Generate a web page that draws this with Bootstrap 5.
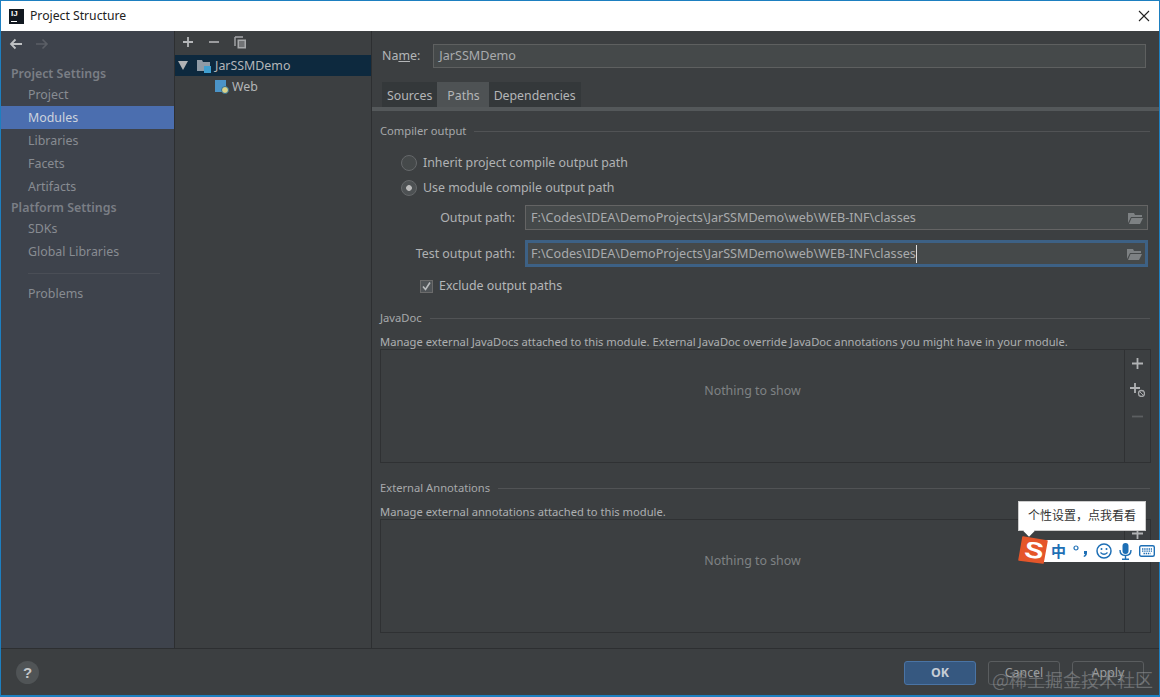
<!DOCTYPE html>
<html lang="en">

<head>
  <meta charset="UTF-8">
  <meta name="viewport" content="width=device-width, initial-scale=1.0">
  <title>Project Structure</title>
  <link href="https://cdn.jsdelivr.net/npm/bootstrap@5.3.3/dist/css/bootstrap.min.css" rel="stylesheet">
  <style>
    html, body { height: 100%; }
    body { background: #3c3f41; color: #b4b6b8; font-family: "Noto Sans", "Noto Sans CJK SC", sans-serif; font-size: 12.4px; line-height: 18px; overflow: hidden; }
    .ide-window { position: relative; width: 1160px; height: 697px; border: 1px solid #1d7fc0; border-bottom-width: 2px; background: #3c3f41; }
    .ide-title { height: 30px; background: #fff; color: #222; padding-left: 8px; gap: 6px; flex: none; font-size: 12.2px; }
    .ide-logo { width: 15px; height: 15px; background: #111820; color: #fff; font: bold 8px/10px "Liberation Sans", sans-serif; padding-left: 2px; position: relative; }
    .ide-logo::after { content: ""; position: absolute; left: 2px; bottom: 2px; width: 6px; height: 1px; background: #fff; }
    .ide-close { margin-left: auto; margin-right: 9px; }
    .ide-body { height: 618px; flex: none; border-bottom: 1px solid #2d2f31; }
    .side-pane { width: 174px; flex: none; background: #3e434c; border-right: 1px solid #2d2f31; }
    .side-nav { height: 25px; padding: 7px 0 0 8px; gap: 12px; margin-bottom: 8px; }
    .side-head { font-weight: 600; color: #7a7e85; height: 19px; line-height: 19px; padding-left: 10px; }
    .side-item { color: #888c92; height: 23px; line-height: 23px; padding-left: 27px; }
    .side-item.is-on { background: #4b6eaf; color: #cdd3dd; }
    .side-gap { border-top: 1px solid #4a4e56; margin: 10px 14px 8px 27px; }
    .tree-pane { width: 197px; flex: none; border-right: 1px solid #2d2f31; }
    .tree-tools { height: 24px; padding: 0 0 2px 7px; gap: 14px; }
    .tree-row { height: 21px; gap: 4px; color: #b4b6b8; }
    .tree-row.is-on { background: #0d293e; padding-left: 3px; }
    .tree-child { padding-left: 39px; gap: 3px; }
    .main-pane { flex: 1; min-width: 0; padding: 13px 9px 0 8px; }
    .name-row { padding-left: 2px; gap: 13px; margin-bottom: 14px; margin-right: 4px; height: 24px; }
    .flat-input { background: #45494a; border: 1px solid #646464; height: 25px; color: #a9abad; padding: 0 2px 0 5px; white-space: nowrap; font-size: 12.6px; }
    .name-input { flex: 1; border-color: #5e6060; height: 24px; }
    .tab-strip { margin-left: 2px; height: 25px; }
    .tab-item { height: 25px; line-height: 28px; padding: 0 5px; color: #b4b6b8; background: #34383a; font-size: 12.3px; }
    .tab-item.is-on { background: #4e5254; padding: 0 9px 0 10px; }
    .tab-rule { height: 4px; background: #54585a; margin: 0 -9px 11px -8px; }
    .group-title { gap: 8px; height: 18px; color: #a7a9ab; font-size: 11.2px; }
    .group-title i { flex: 1; border-top: 1px solid #515355; }
    .group-title + .radio-row { margin-top: 10px; }
    .radio-row { height: 25px; padding-left: 21px; gap: 6px; color: #b0b2b4; }
    .radio-mark { width: 16px; height: 16px; border: 1px solid #65686a; border-radius: 50%; background: #45494a; flex: none; }
    .radio-mark.is-set { background: radial-gradient(circle, #bbb 0 2.5px, #4d5153 3.2px); }
    .path-row { gap: 10px; align-items: center; margin-right: 2px; }
    .path-row-first { margin-top: 5px; }
    .path-row-next { margin-top: 10px; }
    .path-label { width: 135px; text-align: right; color: #afb1b3; flex: none; }
    .path-field { flex: 1; justify-content: space-between; padding-right: 4px; }
    .path-field.is-focus { border: 3px solid #3d6185; height: 27px; padding-left: 3px; padding-right: 3px; }
    .caret-line { border-right: 1px solid #ddd; }
    .check-row { height: 20px; padding-left: 40px; gap: 6px; margin-top: 9px; margin-bottom: 13px; }
    .check-mark { width: 13px; height: 13px; border: 1px solid #6b6b6b; background: #505457; flex: none; }
    .plain-note { font-size: 11.2px; height: 20px; line-height: 20px; color: #adafb1; margin-top: 5px; white-space: nowrap; }
    .list-box { height: 114px; border: 1px solid #2f3133; margin-right: -1px; margin-top: -3px; margin-bottom: 16px; }
    .list-empty { flex: 1; color: #7f8284; padding-bottom: 31px; }
    .list-tools { width: 26px; flex: none; border-left: 1px solid #2f3133; padding-top: 8px; gap: 14px; }
    .ide-footer { height: 46px; flex: none; padding: 1px 15px 0 15px; }
    .help-dot { width: 23px; height: 23px; border-radius: 50%; background: #505456; color: #c4c6c8; font: bold 15px/23px "Liberation Sans", sans-serif; text-align: center; }
    .ide-btn { width: 72px; height: 24px; padding: 0; border-radius: 3px; font-size: 12.4px; line-height: 22px; color: #9b9d9f; background: transparent; border: 1px solid #5a5d5f; }
    .ide-btn.is-main { background: #365880; border-color: #4a74a5; color: #c6cdd6; font-weight: 700; }
    .ime-tip { position: absolute; left: 1017px; top: 500px; width: 128px; height: 30px; background: #fff; border: 1px solid #ccc; color: #333; font-size: 12px; line-height: 28px; text-align: center; white-space: nowrap; }
    .ime-tip::after { content: ""; position: absolute; left: 6px; bottom: -5px; width: 8px; height: 8px; background: #fff; transform: rotate(45deg); }
    .ime-bar { position: absolute; left: 1031px; top: 539px; width: 129px; height: 22px; background: #fff; padding-left: 19px; gap: 7px; color: #1e6fb5; }
    .ime-zh { font: 700 15px/22px "Noto Sans CJK SC", sans-serif; }
    .ime-logo { position: absolute; left: 1017px; top: 534px; }
    .watermark { position: absolute; left: 991px; top: 667px; font: 18px/22px "Noto Sans CJK SC", sans-serif; color: rgba(150, 152, 155, .55); white-space: nowrap; }
  </style>
</head>

<body>
  <div class="ide-window d-flex flex-column">
    <div class="ide-title d-flex align-items-center">
      <div class="ide-logo">IJ</div>
      <span>Project Structure</span>
      <svg class="ide-close" width="12" height="12" viewBox="0 0 12 12"><path d="M1 1l10 10M11 1L1 11" stroke="#222" stroke-width="1.1" /></svg>
    </div>

    <div class="ide-body d-flex">
      <!-- settings list -->
      <div class="side-pane">
        <div class="side-nav d-flex">
          <svg width="14" height="12" viewBox="0 0 14 12"><path d="M13 6H2M6.5 1.5L2 6l4.500 4.500" fill="none" stroke="#bfc1c3" stroke-width="1.8" /></svg>
          <svg width="14" height="12" viewBox="0 0 14 12"><path d="M1 6h11M7.500 1.500L12 6l-4.500 4.500" fill="none" stroke="#5b5f66" stroke-width="1.6" /></svg>
        </div>
        <div class="side-head">Project Settings</div>
        <div class="side-item">Project</div>
        <div class="side-item is-on">Modules</div>
        <div class="side-item">Libraries</div>
        <div class="side-item">Facets</div>
        <div class="side-item">Artifacts</div>
        <div class="side-head">Platform Settings</div>
        <div class="side-item">SDKs</div>
        <div class="side-item">Global Libraries</div>
        <div class="side-gap"></div>
        <div class="side-item">Problems</div>
      </div>

      <!-- module tree -->
      <div class="tree-pane">
        <div class="tree-tools d-flex align-items-center">
          <svg width="12" height="12" viewBox="0 0 12 12"><path d="M6 1v10M1 6h10" stroke="#b5b7b9" stroke-width="1.800" /></svg>
          <svg width="12" height="12" viewBox="0 0 12 12"><path d="M1 6h10" stroke="#a6a8aa" stroke-width="1.800" /></svg>
          <svg width="13" height="13" viewBox="0 0 13 13"><path d="M1 1h8M1 1v9" fill="none" stroke="#a6a8aa" stroke-width="1.400" /><path d="M3.500 3.500h8.500v9H3.500z" fill="#a6a8aa" /><path d="M5 6h5.500M5 8h5.500M5 10h5.500" stroke="#3c3f41" /></svg>
        </div>
        <div class="tree-row is-on d-flex align-items-center">
          <svg width="10" height="9" viewBox="0 0 10 9"><path d="M0 0h10L5 9z" fill="#b0b2b4" /></svg>
          <svg class="ms-1" width="15" height="15" viewBox="0 0 15 15"><path d="M1 2h5l1 2h7v9H1z" fill="#8f9ba6" /><rect x="8" y="8" width="7" height="7" fill="#3f9fd0" /></svg>
          <span>JarSSMDemo</span>
        </div>
        <div class="tree-row tree-child d-flex align-items-center">
          <svg width="15" height="15" viewBox="0 0 15 15"><path d="M1 1h11v12H1z" fill="#4b94c8" /><circle cx="11" cy="11" r="3.500" fill="#d9d28a" stroke="#2f6f95" /></svg>
          <span>Web</span>
        </div>
      </div>

      <!-- module settings -->
      <div class="main-pane">
        <div class="name-row d-flex align-items-center">
          <span>Na<u>m</u>e:</span>
          <div class="flat-input name-input d-flex align-items-center">JarSSMDemo</div>
        </div>
        <div class="tab-strip d-flex">
          <div class="tab-item">Sources</div>
          <div class="tab-item is-on">Paths</div>
          <div class="tab-item">Dependencies</div>
        </div>
        <div class="tab-rule"></div>

        <div class="group-title d-flex align-items-center"><span>Compiler output</span><i></i></div>
        <div class="radio-row d-flex align-items-center"><span class="radio-mark"></span>Inherit project compile output path</div>
        <div class="radio-row d-flex align-items-center"><span class="radio-mark is-set"></span>Use module compile output path</div>
        <div class="path-row path-row-first d-flex">
          <span class="path-label">Output path:</span>
          <div class="flat-input path-field d-flex align-items-center">F:\Codes\IDEA\DemoProjects\JarSSMDemo\web\WEB-INF\classes
            <svg width="15" height="12" viewBox="0 0 15 12"><path d="M0 1h6l1 2h7v2H3L0 11z" fill="#7d8183" /><path d="M3.500 6H15l-3 6H1z" fill="#7d8183" /></svg>
          </div>
        </div>
        <div class="path-row path-row-next d-flex">
          <span class="path-label">Test output path:</span>
          <div class="flat-input path-field is-focus d-flex align-items-center"><span class="caret-line">F:\Codes\IDEA\DemoProjects\JarSSMDemo\web\WEB-INF\classes</span>
            <svg width="15" height="12" viewBox="0 0 15 12"><path d="M0 1h6l1 2h7v2H3L0 11z" fill="#7d8183" /><path d="M3.500 6H15l-3 6H1z" fill="#7d8183" /></svg>
          </div>
        </div>
        <div class="check-row d-flex align-items-center">
          <span class="check-mark d-flex align-items-center justify-content-center"><svg width="11" height="11" viewBox="0 0 11 11"><path d="M2 5.500l2.500 3L9 1.500" fill="none" stroke="#b9bbbd" stroke-width="1.600" /></svg></span>
          <span>Exclude output paths</span>
        </div>

        <div class="group-title d-flex align-items-center"><span>JavaDoc</span><i></i></div>
        <div class="plain-note">Manage external JavaDocs attached to this module. External JavaDoc override JavaDoc annotations you might have in your module.</div>
        <div class="list-box d-flex">
          <div class="list-empty d-flex align-items-center justify-content-center">Nothing to show</div>
          <div class="list-tools d-flex flex-column align-items-center">
            <svg width="11" height="11" viewBox="0 0 11 11"><path d="M5.500 0v11M0 5.500h11" stroke="#b0b2b4" stroke-width="1.800" /></svg>
            <svg width="15" height="14" viewBox="0 0 15 14"><path d="M5 0v10M0 5h10" stroke="#b0b2b4" stroke-width="1.800" /><circle cx="11.500" cy="10.500" r="3" fill="none" stroke="#a6a8aa" stroke-width="1.300" /><path d="M9.500 8.500l4 4" stroke="#a6a8aa" /></svg>
            <svg width="11" height="11" viewBox="0 0 11 11"><path d="M0 5.500h11" stroke="#5c5f61" stroke-width="1.800" /></svg>
          </div>
        </div>

        <div class="group-title d-flex align-items-center"><span>External Annotations</span><i></i></div>
        <div class="plain-note">Manage external annotations attached to this module.</div>
        <div class="list-box d-flex mb-0">
          <div class="list-empty d-flex align-items-center justify-content-center">Nothing to show</div>
          <div class="list-tools d-flex flex-column align-items-center">
            <svg width="11" height="11" viewBox="0 0 11 11"><path d="M5.500 0v11M0 5.500h11" stroke="#b0b2b4" stroke-width="1.800" /></svg>
          </div>
        </div>
      </div>
    </div>

    <div class="ide-footer d-flex align-items-center">
      <div class="help-dot">?</div>
      <div class="d-flex ms-auto gap-2">
        <button type="button" class="btn ide-btn is-main me-1">OK</button>
        <button type="button" class="btn ide-btn me-1">Cancel</button>
        <button type="button" class="btn ide-btn">Apply</button>
      </div>
    </div>

    <!-- input method popup over the dialog -->
    <div class="ime-tip">个性设置，点我看看</div>
    <div class="ime-bar d-flex align-items-center">
      <span class="ime-zh">中</span>
      <svg width="16" height="14" viewBox="0 0 16 14"><circle cx="3" cy="4" r="2" fill="none" stroke="#1e6fb5" stroke-width="1.200" /><path d="M11 7h3v2q0 3-3 4l-.5-1q1.500-.8 1.500-2h-1z" fill="#1e6fb5" /></svg>
      <svg width="16" height="16" viewBox="0 0 16 16"><circle cx="8" cy="8" r="7" fill="none" stroke="#1e6fb5" stroke-width="1.500" /><circle cx="5.500" cy="6" r="1" fill="#1e6fb5" /><circle cx="10.500" cy="6" r="1" fill="#1e6fb5" /><path d="M4.500 9.500q3.500 3.500 7 0" fill="none" stroke="#1e6fb5" stroke-width="1.200" /></svg>
      <svg width="13" height="17" viewBox="0 0 13 17"><rect x="3.500" y="0" width="6" height="11" rx="3" fill="#1e6fb5" /><path d="M1 7q0 5.500 5.500 5.500T12 7M6.500 12.500V16M3 16.300h7" fill="none" stroke="#1e6fb5" stroke-width="1.400" /></svg>
      <svg width="16" height="12" viewBox="0 0 16 12"><rect x=".7" y=".7" width="14.600" height="10.600" rx="1.500" fill="none" stroke="#1e6fb5" stroke-width="1.400" /><path d="M3 4h10M3 6.200h10M4.500 8.500h7" stroke="#1e6fb5" stroke-dasharray="1.400 .8" stroke-width="1.300" /></svg>
    </div>
    <svg class="ime-logo" width="30" height="30" viewBox="0 0 30 30"><path d="M5 2l24 4-4 22L1 25z" fill="#e5562a" stroke="#e5562a" stroke-linejoin="round" stroke-width="1.500" /><text x="0" y="0" transform="translate(15 23) rotate(9) scale(1.250 1)" text-anchor="middle" font-family="Liberation Sans, sans-serif" font-weight="700" font-size="23" fill="#fff">S</text></svg>
    <div class="watermark">@稀土掘金技术社区</div>
  </div>

  <script src="https://cdn.jsdelivr.net/npm/bootstrap@5.3.3/dist/js/bootstrap.bundle.min.js"></script>
</body>

</html>
